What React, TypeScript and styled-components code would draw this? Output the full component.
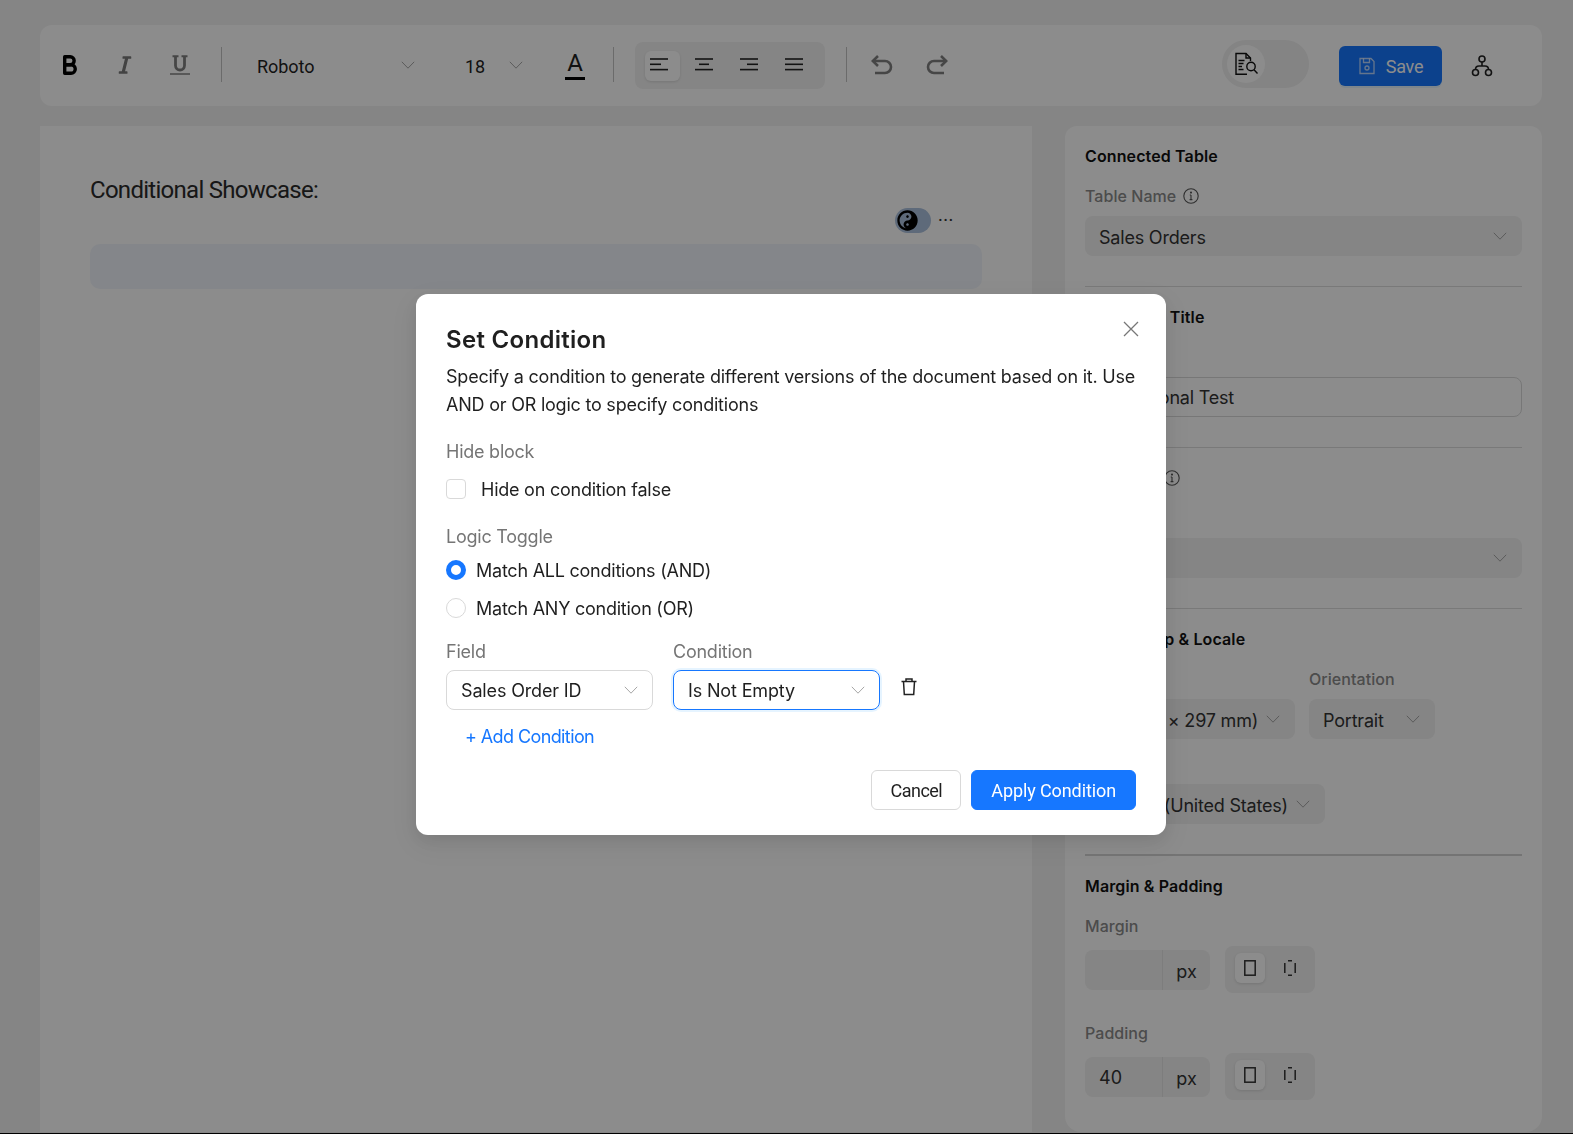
import * as React from "react";
import styled, { createGlobalStyle } from "styled-components";
import { FaItalic, FaYinYang } from "react-icons/fa";

const GlobalStyle = createGlobalStyle`
    html, body {
        margin: 0;
        padding: 0;
        background: #000;
    }
    * {
        box-sizing: border-box;
    }
`;

const Page = styled.div`
    width: 100%;
    height: 1133px;
    padding: 25px 31px 1px 40px;
    display: flex;
    flex-direction: column;
    gap: 20px;
    overflow: hidden;
    background: #f3f3f3;
    font-family: "Inter", "Liberation Sans", sans-serif;
    color: #1f1f1f;
`;

const Toolbar = styled.div`
    flex: 0 0 81px;
    display: flex;
    align-items: center;
    padding: 0 45px 2px 15px;
    background: #fff;
    border-radius: 12px;
    font-family: "Roboto", sans-serif;
    font-size: 18px;
`;

const ToolSlot = styled.div<{ $ml?: number; $mt?: number; $color?: string }>`
    width: 30px;
    height: 30px;
    flex: none;
    margin-left: ${(p) => p.$ml ?? 0}px;
    margin-top: ${(p) => p.$mt ?? 0}px;
    display: flex;
    align-items: center;
    justify-content: center;
    color: ${(p) => p.$color ?? "#222"};
`;

const ToolSep = styled.div<{ $ml: number }>`
    width: 1px;
    height: 35px;
    flex: none;
    margin-left: ${(p) => p.$ml}px;
    background: #c4c4c4;
`;

const ToolSelect = styled.div<{ $ml: number; $width: number }>`
    width: ${(p) => p.$width}px;
    flex: none;
    margin-left: ${(p) => p.$ml}px;
    display: flex;
    align-items: center;
    justify-content: space-between;
    padding-top: 3px;
    letter-spacing: -0.05px;

    svg {
        margin-top: -3px;
    }
`;

const FontColor = styled.div`
    width: 20px;
    border-bottom: 3px solid #000;
    text-align: center;
    font-size: 24px;
    line-height: 27px;
`;

const AlignGroup = styled.div`
    width: 190px;
    height: 47px;
    flex: none;
    margin: 2px 0 0 21px;
    padding: 0 10px;
    display: flex;
    align-items: center;
    gap: 10px;
    background: #f3f3f3;
    border-radius: 8px;
`;

const AlignButton = styled.div<{ $active?: boolean }>`
    width: 35px;
    height: 30px;
    padding: 0 7px 2px 0;
    display: flex;
    align-items: center;
    justify-content: center;
    border-radius: 6px;
    background: ${(p) => (p.$active ? "#fff" : "transparent")};
    box-shadow: ${(p) => (p.$active ? "0 1px 3px rgba(0,0,0,.12)" : "none")};
`;

const PreviewToggle = styled.div`
    width: 87px;
    height: 48px;
    flex: none;
    margin: 0 0 2px auto;
    padding: 5px;
    background: #f0f0f0;
    border-radius: 24px;
`;

const PreviewKnob = styled.div`
    width: 38px;
    height: 38px;
    display: flex;
    align-items: center;
    justify-content: center;
    background: #fff;
    border-radius: 50%;
`;

const SaveButton = styled.div`
    width: 103px;
    height: 40px;
    flex: none;
    margin: 2px 0 0 30px;
    padding-top: 1px;
    display: flex;
    align-items: center;
    justify-content: center;
    gap: 10px;
    background: #1677ff;
    border-radius: 6px;
    color: #fff;
    letter-spacing: -0.3px;
    box-shadow: 0 2px 0 rgba(5, 145, 255, 0.1);
`;

const Main = styled.div`
    flex: 1;
    min-height: 0;
    display: flex;
    gap: 33px;
`;

const Canvas = styled.div`
    flex: 1;
    padding: 50px 50px 0;
    background: #fff;
`;

const DocTitle = styled.div`
    font-family: "Roboto", sans-serif;
    font-size: 24px;
    line-height: 28px;
    letter-spacing: -0.03em;
    color: #2a2a2a;
`;

const BlockActions = styled.div`
    height: 26px;
    margin-top: 3px;
    padding-right: 28px;
    display: flex;
    justify-content: flex-end;
    align-items: center;
    gap: 7px;
`;

const BlockSwitch = styled.div`
    width: 36px;
    height: 25px;
    padding: 2px;
    display: flex;
    align-items: center;
    background: #abc1de;
    border-radius: 13px;
`;

const Dots = styled.div`
    font-family: "Roboto", sans-serif;
    font-weight: 700;
    font-size: 14px;
    line-height: 10px;
    letter-spacing: 1px;
    color: #333;
`;

const EmptyBlock = styled.div`
    height: 45px;
    margin-top: 11px;
    background: #f1f5fb;
    border-radius: 10px;
`;

const Sidebar = styled.div`
    flex: 0 0 477px;
    padding: 20px;
    background: #fff;
    border-radius: 12px 12px 16px 16px;
    overflow: hidden;
`;

const SectionTitle = styled.div`
    font-size: 16px;
    font-weight: 600;
    line-height: 20px;
    letter-spacing: 0.12px;
    margin-bottom: 20px;
    color: #111;
    display: flex;
    align-items: center;
    gap: 7px;
`;

const FieldLabel = styled.div`
    font-size: 16px;
    font-weight: 500;
    line-height: 20px;
    letter-spacing: 0.05px;
    margin-bottom: 10px;
    color: #8a8a8a;
    display: flex;
    align-items: center;
    gap: 7px;
`;

const Divider = styled.div<{ $thick?: boolean }>`
    height: ${(p) => (p.$thick ? 2 : 1)}px;
    margin: 30px 0 20px;
    background: ${(p) => (p.$thick ? "#d4d4d4" : "#dcdcdc")};
`;

const FilledSelect = styled.div<{ $width?: number }>`
    width: ${(p) => (p.$width ? `${p.$width}px` : "100%")};
    height: 40px;
    padding: 2px 15px 0 14px;
    display: flex;
    align-items: center;
    justify-content: space-between;
    background: #f2f2f2;
    border-radius: 8px;
    font-size: 18px;
    letter-spacing: -0.2px;
    color: #333;
    white-space: nowrap;

    svg {
        margin-top: -2px;
    }
`;

const OutlinedInput = styled.div`
    height: 40px;
    padding: 1px 14px 0;
    display: flex;
    align-items: center;
    border: 1px solid #d9d9d9;
    border-radius: 8px;
    font-size: 18px;
    letter-spacing: -0.2px;
    color: #333;
`;

const SelectRow = styled.div`
    display: flex;
    gap: 14px;
`;

const SubField = styled.div`
    display: flex;
    flex-direction: column;
`;

const LocaleField = styled.div`
    margin-top: 15px;
`;

const SpacingRow = styled.div<{ $mb?: number }>`
    display: flex;
    align-items: center;
    gap: 15px;
    margin-bottom: ${(p) => p.$mb ?? 0}px;
`;

const UnitInput = styled.div`
    width: 125px;
    height: 40px;
    display: flex;
    background: #f2f2f2;
    border-radius: 8px;
    font-size: 18px;
    color: #333;
`;

const UnitValue = styled.div`
    width: 78px;
    padding: 1px 0 0 14px;
    display: flex;
    align-items: center;
    border-right: 1px solid #e4e4e4;
`;

const UnitName = styled.div`
    flex: 1;
    display: flex;
    align-items: center;
    justify-content: center;
    padding-top: 3px;
`;

const SpacingToggle = styled.div`
    width: 90px;
    height: 47px;
    padding: 0 10px;
    display: flex;
    align-items: center;
    gap: 10px;
    background: #f2f2f2;
    border-radius: 8px;
`;

const SpacingButton = styled.div<{ $active?: boolean }>`
    width: 30px;
    height: 30px;
    display: flex;
    align-items: center;
    justify-content: center;
    border-radius: 6px;
    margin-top: -3px;
    background: ${(p) => (p.$active ? "#fff" : "transparent")};
    box-shadow: ${(p) => (p.$active ? "0 1px 3px rgba(0,0,0,.12)" : "none")};
`;

const Mask = styled.div`
    position: fixed;
    inset: 0 0 1px 0;
    background: rgba(0, 0, 0, 0.45);
`;

const Modal = styled.div`
    position: absolute;
    top: 294px;
    left: 416px;
    width: 750px;
    height: 541px;
    padding: 31px 30px 30px;
    background: #fff;
    border-radius: 12px;
    box-shadow: 0 6px 16px rgba(0, 0, 0, 0.08), 0 9px 28px 8px rgba(0, 0, 0, 0.05);
    font-family: "Inter", "Liberation Sans", sans-serif;
    font-size: 18px;
    letter-spacing: -0.24px;
    color: #1f1f1f;
`;

const CloseButton = styled.div`
    position: absolute;
    top: 25px;
    right: 25px;
    width: 20px;
    height: 20px;
    display: flex;
    align-items: center;
    justify-content: center;
    color: #777;
`;

const ModalTitle = styled.div`
    font-size: 24px;
    font-weight: 600;
    line-height: 30px;
    letter-spacing: 0.3px;
`;

const ModalText = styled.div`
    margin-top: 8px;
    line-height: 28px;
    letter-spacing: -0.22px;
`;

const ModalLabel = styled.div<{ $mt: number }>`
    margin-top: ${(p) => p.$mt}px;
    line-height: 24px;
    color: #757575;
`;

const CheckRow = styled.div`
    margin-top: 13px;
    height: 24px;
    display: flex;
    align-items: center;
    gap: 15px;
`;

const CheckBox = styled.div`
    width: 20px;
    height: 20px;
    border: 1px solid #d9d9d9;
    border-radius: 4px;
`;

const RadioGroup = styled.div`
    margin-top: 2px;
`;

const RadioRow = styled.div`
    height: 38px;
    display: flex;
    align-items: center;
    gap: 10px;
`;

const RadioDot = styled.div<{ $on?: boolean }>`
    width: 20px;
    height: 20px;
    border-radius: 50%;
    border: ${(p) => (p.$on ? "5px solid #1677ff" : "1px solid #d9d9d9")};
    background: #fff;
`;

const ConditionGrid = styled.div`
    margin-top: 13px;
    display: flex;
    gap: 20px;
`;

const ConditionField = styled.div`
    width: 207px;
`;

const OutlinedSelect = styled.div<{ $focus?: boolean }>`
    margin-top: 6px;
    height: 40px;
    padding: 0 14px;
    display: flex;
    align-items: center;
    justify-content: space-between;
    letter-spacing: -0.15px;
    border: 1px solid ${(p) => (p.$focus ? "#1677ff" : "#d9d9d9")};
    border-radius: 8px;
    box-shadow: ${(p) => (p.$focus ? "0 0 0 2px rgba(5,145,255,.1)" : "none")};
`;

const TrashButton = styled.div`
    margin-top: 37px;
    width: 18px;
    height: 20px;
`;

const AddCondition = styled.div`
    margin-top: 15px;
    padding-left: 19px;
    line-height: 24px;
    letter-spacing: -0.6px;
    color: #1677ff;
`;

const ModalFooter = styled.div`
    margin-top: 21px;
    display: flex;
    justify-content: flex-end;
    gap: 10px;
`;

const FooterButton = styled.div<{ $primary?: boolean }>`
    height: 40px;
    padding: 0 ${(p) => (p.$primary ? 19 : 18)}px;
    display: flex;
    align-items: center;
    border-radius: 6px;
    font-family: "Roboto", sans-serif;
    letter-spacing: ${(p) => (p.$primary ? "-0.1px" : "-0.5px")};
    background: ${(p) => (p.$primary ? "#1677ff" : "#fff")};
    border: 1px solid ${(p) => (p.$primary ? "#1677ff" : "#d9d9d9")};
    color: ${(p) => (p.$primary ? "#fff" : "#1f1f1f")};
`;

const Chevron: React.FC<{ color?: string }> = ({ color = "#a6a6a6" }) => (
    <svg width="14" height="14" viewBox="0 0 14 14" fill="none" stroke={color} strokeWidth="1">
        <path d="M0.8 3.8 L7 10.2 L13.2 3.8" />
    </svg>
);

const InfoIcon: React.FC = () => (
    <svg width="16" height="16" viewBox="0 0 16 16" fill="none" stroke="#555" strokeWidth="1.1">
        <circle cx="8" cy="8" r="7.2" />
        <path d="M8 7v4.6M6.8 7H8M6.6 11.6h2.8" />
        <circle cx="8" cy="4.6" r="0.5" fill="#555" />
    </svg>
);

const BoldIcon: React.FC = () => (
    <svg width="16" height="20" viewBox="0 0 16 20" fill="none" stroke="#000" strokeWidth="3.4" strokeLinejoin="round">
        <path d="M2.700 1.800h5.500a3.900 3.900 0 0 1 0 7.900H2.700z" />
        <path d="M2.700 9.700h6.300a4.200 4.200 0 0 1 0 8.500H2.700z" />
    </svg>
);

const UnderlineIcon: React.FC = () => (
    <svg width="20" height="20" viewBox="0 0 20 20" fill="none" stroke="#808080">
        <path d="M2.500 1.200h6M11.500 1.200h6" strokeWidth="2" />
        <path d="M5.500 1.200v9.300a4.500 4.500 0 0 0 9 0V1.200" strokeWidth="2.800" />
        <path d="M0 19h20" strokeWidth="1.500" />
    </svg>
);

const UndoIcon: React.FC<{ flip?: boolean }> = ({ flip }) => (
    <svg
        width="22"
        height="20"
        viewBox="0 0 22 20"
        fill="none"
        stroke="#808080"
        strokeWidth="2.600"
        transform={flip ? "scale(-1 1)" : undefined}
    >
        <path d="M7 1L1.800 6 7 11" />
        <path d="M1.800 6H14a6 6 0 0 1 0 12H4" />
    </svg>
);

const AlignIcon: React.FC<{ lines: [number, number][] }> = ({ lines }) => (
    <svg width="18" height="13" viewBox="0 0 18 13" fill="none" stroke="#222" strokeWidth="1.6">
        {lines.map(([a, b], i) => (
            <path key={i} d={`M${a} ${1 + i * 5.3}H${b}`} />
        ))}
    </svg>
);

const DocSearchIcon: React.FC = () => (
    <svg width="24" height="24" viewBox="0 0 24 24" fill="none" stroke="#111" strokeWidth="1.4">
        <path d="M13 22.300H2V1.500h10l4.500 4.500v3" />
        <path d="M12 1.500v4.500h4.500" />
        <path d="M4.500 8.500h6M4.500 11.500h5M4.500 14.500h3.500M4.500 17.500h5" />
        <circle cx="17" cy="14.500" r="4.200" />
        <path d="M20 17.800l3.500 3.700" />
    </svg>
);

const SaveIcon: React.FC = () => (
    <svg width="18" height="18" viewBox="0 0 18 18" fill="none" stroke="#fff" strokeOpacity=".7" strokeWidth="1.3">
        <path d="M2 1.500h11l3 3v12H2z" />
        <path d="M5.500 1.500v4h6v-4" />
        <circle cx="9" cy="11" r="2" />
    </svg>
);

const NetworkIcon: React.FC = () => (
    <svg width="24" height="24" viewBox="0 0 24 24" fill="none" stroke="#222" strokeWidth="1.6">
        <circle cx="12" cy="5" r="3" />
        <circle cx="5.500" cy="18.500" r="3" />
        <circle cx="18.500" cy="18.500" r="3" />
        <path d="M12 8v4M5.500 15.500c0-2.200 1.300-3.500 3.500-3.500h6c2.200 0 3.500 1.300 3.500 3.500" />
    </svg>
);

const PageIcon: React.FC<{ dashed?: boolean }> = ({ dashed }) => (
    <svg width="12" height="16" viewBox="0 0 12 16" fill="none" stroke="#333" strokeWidth="1.500">
        {dashed ? (
            <path d="M4 .8h4M4 15.200h4M.8 3v10M11.200 3v10" />
        ) : (
            <rect x=".8" y=".8" width="10.400" height="14.400" />
        )}
    </svg>
);

const TrashIcon: React.FC = () => (
    <svg width="18" height="20" viewBox="0 0 18 20" fill="none" stroke="#222" strokeWidth="1.500">
        <path d="M1.500 4.500h15M6 4.500V2h6v2.500M3.500 4.500l.8 13h9.400l.8-13" />
    </svg>
);

const App: React.FC = () => {
    return (
        <>
            <GlobalStyle />
            <Page>
                <Toolbar>
                    <ToolSlot>
                        <BoldIcon />
                    </ToolSlot>
                    <ToolSlot $ml={25} $color="#7a7a7a">
                        <FaItalic size={20} />
                    </ToolSlot>
                    <ToolSlot $ml={25}>
                        <UnderlineIcon />
                    </ToolSlot>
                    <ToolSep $ml={26} />
                    <ToolSelect $ml={35} $width={158}>
                        Roboto
                        <Chevron />
                    </ToolSelect>
                    <ToolSelect $ml={50} $width={58}>
                        18
                        <Chevron />
                    </ToolSelect>
                    <ToolSlot $ml={37}>
                        <FontColor>A</FontColor>
                    </ToolSlot>
                    <ToolSep $ml={23} />
                    <AlignGroup>
                        <AlignButton $active>
                            <AlignIcon lines={[[0, 18], [0, 11], [0, 18]]} />
                        </AlignButton>
                        <AlignButton>
                            <AlignIcon lines={[[0, 18], [4, 14], [0, 18]]} />
                        </AlignButton>
                        <AlignButton>
                            <AlignIcon lines={[[0, 18], [7, 18], [0, 18]]} />
                        </AlignButton>
                        <AlignButton>
                            <AlignIcon lines={[[0, 18], [0, 18], [0, 18]]} />
                        </AlignButton>
                    </AlignGroup>
                    <ToolSep $ml={21} />
                    <ToolSlot $ml={20}>
                        <UndoIcon />
                    </ToolSlot>
                    <ToolSlot $ml={25}>
                        <UndoIcon flip />
                    </ToolSlot>
                    <PreviewToggle>
                        <PreviewKnob>
                            <DocSearchIcon />
                        </PreviewKnob>
                    </PreviewToggle>
                    <SaveButton>
                        <SaveIcon />
                        Save
                    </SaveButton>
                    <ToolSlot $ml={25} $mt={2}>
                        <NetworkIcon />
                    </ToolSlot>
                </Toolbar>
                <Main>
                    <Canvas>
                        <DocTitle>Conditional Showcase:</DocTitle>
                        <BlockActions>
                            <BlockSwitch>
                                <FaYinYang size={21} color="#000" />
                            </BlockSwitch>
                            <Dots>···</Dots>
                        </BlockActions>
                        <EmptyBlock />
                    </Canvas>
                    <Sidebar>
                        <SectionTitle>Connected Table</SectionTitle>
                        <FieldLabel>
                            Table Name <InfoIcon />
                        </FieldLabel>
                        <FilledSelect>
                            Sales Orders
                            <Chevron />
                        </FilledSelect>
                        <Divider />
                        <SectionTitle>Document Title</SectionTitle>
                        <FieldLabel>Title</FieldLabel>
                        <OutlinedInput>Conditional Test</OutlinedInput>
                        <Divider />
                        <SectionTitle>
                            Template <InfoIcon />
                        </SectionTitle>
                        <FieldLabel>Theme</FieldLabel>
                        <FilledSelect>
                            Default
                            <Chevron />
                        </FilledSelect>
                        <Divider />
                        <SectionTitle>Page Setup &amp; Locale</SectionTitle>
                        <SelectRow>
                            <SubField>
                                <FieldLabel>Page Size</FieldLabel>
                                <FilledSelect $width={210}>
                                    A4 (210 × 297 mm)
                                    <Chevron />
                                </FilledSelect>
                            </SubField>
                            <SubField>
                                <FieldLabel>Orientation</FieldLabel>
                                <FilledSelect $width={126}>
                                    Portrait
                                    <Chevron />
                                </FilledSelect>
                            </SubField>
                        </SelectRow>
                        <LocaleField>
                            <FieldLabel>Locale</FieldLabel>
                            <FilledSelect $width={240}>
                                English (United States)
                                <Chevron />
                            </FilledSelect>
                        </LocaleField>
                        <Divider $thick />
                        <SectionTitle>Margin &amp; Padding</SectionTitle>
                        <FieldLabel>Margin</FieldLabel>
                        <SpacingRow $mb={30}>
                            <UnitInput>
                                <UnitValue />
                                <UnitName>px</UnitName>
                            </UnitInput>
                            <SpacingToggle>
                                <SpacingButton $active>
                                    <PageIcon />
                                </SpacingButton>
                                <SpacingButton>
                                    <PageIcon dashed />
                                </SpacingButton>
                            </SpacingToggle>
                        </SpacingRow>
                        <FieldLabel>Padding</FieldLabel>
                        <SpacingRow>
                            <UnitInput>
                                <UnitValue>40</UnitValue>
                                <UnitName>px</UnitName>
                            </UnitInput>
                            <SpacingToggle>
                                <SpacingButton $active>
                                    <PageIcon />
                                </SpacingButton>
                                <SpacingButton>
                                    <PageIcon dashed />
                                </SpacingButton>
                            </SpacingToggle>
                        </SpacingRow>
                    </Sidebar>
                </Main>
            </Page>
            <Mask>
                <Modal>
                    <CloseButton>
                        <svg width="18" height="18" viewBox="0 0 18 18" stroke="currentColor" strokeWidth="1.300">
                            <path d="M2 2l14 14M16 2L2 16" />
                        </svg>
                    </CloseButton>
                    <ModalTitle>Set Condition</ModalTitle>
                    <ModalText>
                        Specify a condition to generate different versions of the document based on it. Use
                        AND or OR logic to specify conditions
                    </ModalText>
                    <ModalLabel $mt={21}>Hide block</ModalLabel>
                    <CheckRow>
                        <CheckBox />
                        Hide on condition false
                    </CheckRow>
                    <ModalLabel $mt={24}>Logic Toggle</ModalLabel>
                    <RadioGroup>
                        <RadioRow>
                            <RadioDot $on />
                            Match ALL conditions (AND)
                        </RadioRow>
                        <RadioRow>
                            <RadioDot />
                            Match ANY condition (OR)
                        </RadioRow>
                    </RadioGroup>
                    <ConditionGrid>
                        <ConditionField>
                            <ModalLabel $mt={0}>Field</ModalLabel>
                            <OutlinedSelect>
                                Sales Order ID
                                <Chevron />
                            </OutlinedSelect>
                        </ConditionField>
                        <ConditionField>
                            <ModalLabel $mt={0}>Condition</ModalLabel>
                            <OutlinedSelect $focus>
                                Is Not Empty
                                <Chevron />
                            </OutlinedSelect>
                        </ConditionField>
                        <TrashButton>
                            <TrashIcon />
                        </TrashButton>
                    </ConditionGrid>
                    <AddCondition>+ Add Condition</AddCondition>
                    <ModalFooter>
                        <FooterButton>Cancel</FooterButton>
                        <FooterButton $primary>Apply Condition</FooterButton>
                    </ModalFooter>
                </Modal>
            </Mask>
        </>
    );
};

export default App;
